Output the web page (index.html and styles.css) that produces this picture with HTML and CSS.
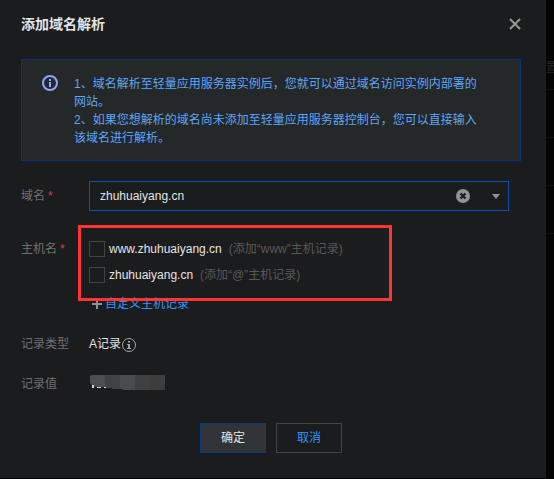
FILE: index.html
```html
<!DOCTYPE html>
<html lang="zh-CN">
<head>
<meta charset="utf-8">
<title>添加域名解析</title>
<link rel="stylesheet" href="styles.css">
</head>
<body>
<main class="dialog" role="dialog" aria-labelledby="dialog-title">
  <header class="dialog-header">
    <h1 class="dialog-title" id="dialog-title">添加域名解析</h1>
    <button class="icon-button" type="button" aria-label="关闭">
      <svg width="12" height="12" viewBox="0 0 12 12" fill="none" stroke="#999791" stroke-width="2"><path d="M1 1l10 10M11 1L1 11"/></svg>
    </button>
  </header>

  <section class="notice">
    <svg class="notice-icon" width="16" height="16" viewBox="0 0 16 16" fill="none"><circle cx="8" cy="8" r="7" stroke="#8fa5ff" stroke-width="2"/><path d="M7 4h2v2H7zM7 7h2v5H7z" fill="#8fa5ff"/></svg>
    <p class="notice-text">1、域名解析至轻量应用服务器实例后，您就可以通过域名访问实例内部署的网站。<br>2、如果您想解析的域名尚未添加至轻量应用服务器控制台，您可以直接输入该域名进行解析。</p>
  </section>

  <form class="form">
    <div class="row">
      <label class="row-label" for="domain">域名<span class="required">*</span></label>
      <div class="combo">
        <input class="combo-input" id="domain" type="text" value="zhuhuaiyang.cn">
        <button class="icon-button" type="button" aria-label="清除">
          <svg width="14" height="14" viewBox="0 0 14 14"><circle cx="7" cy="7" r="7" fill="#929292"/><path d="M4.5 4.5l5 5M9.5 4.5l-5 5" stroke="#1b1c1e" stroke-width="2.2"/></svg>
        </button>
        <button class="icon-button" type="button" aria-label="展开">
          <svg width="8" height="5" viewBox="0 0 8 5"><path d="M0 0h8L4 5z" fill="#929292"/></svg>
        </button>
      </div>
    </div>

    <div class="row">
      <span class="row-label" id="host-label">主机名<span class="required">*</span></span>
      <div class="hosts" role="group" aria-labelledby="host-label">
        <label class="host"><input class="checkbox" type="checkbox"><span>www.zhuhuaiyang.cn</span><span class="hint">(添加“www”主机记录)</span></label>
        <label class="host"><input class="checkbox" type="checkbox"><span>zhuhuaiyang.cn</span><span class="hint">(添加“@”主机记录)</span></label>
        <a class="add-host" href="#custom">
          <svg width="10" height="10" viewBox="0 0 10 10" stroke="#929292" stroke-width="2"><path d="M0 5h10M5 0v10"/></svg>自定义主机记录</a>
        <div class="highlight"></div>
      </div>
    </div>

    <div class="row">
      <span class="row-label">记录类型</span>
      <div class="value">A记录<svg class="info-icon" width="14" height="14" viewBox="0 0 14 14" fill="none"><circle cx="7" cy="7" r="6.5" stroke="#a5a5a5"/><path d="M6 3h2v1.5H6zM5 6h3v4h1v1H5v-1h1V7H5z" fill="#a5a5a5"/></svg></div>
    </div>

    <div class="row">
      <span class="row-label">记录值</span>
      <div class="value">
        <svg class="mask" width="75" height="16" viewBox="0 0 75 16" role="img" aria-label="已遮盖"><path d="M0 2L2 1h13v12H6L2 11 0 9z" fill="#4d4e50"/><path d="M15 1h15v14h-8v-1h-7z" fill="#414244"/><path d="M30 1h15v15H33v-1h-3z" fill="#4a4b4d"/><path d="M45 1h15v15H45z" fill="#3f4042"/><path d="M60 1h15v15H60z" fill="#3c3d3c"/><path d="M2 11h2v3H2zM7 13h1v1H7zM8 13h3v1H8zM14 13h2v1h-2z" fill="#d0d0d0"/></svg>
      </div>
    </div>
  </form>

  <footer class="actions">
    <button class="button button-primary" type="button">确定</button>
    <button class="button" type="button">取消</button>
  </footer>
</main>
<aside class="backdrop">
  <div class="backdrop-cell">置</div>
  <div class="backdrop-cell"></div>
  <div class="backdrop-cell"></div>
  <div class="backdrop-cell"></div>
</aside>
</body>
</html>
```
FILE: styles.css
```css
* {
  box-sizing: border-box;
}

body {
  margin: 0;
  min-height: 100vh;
  padding-bottom: 1px;
  display: flex;
  background: #050505;
  color: #e4e4e4;
  font: 12px/18px "Liberation Sans", "Noto Sans CJK SC", sans-serif;
}

.dialog {
  flex: 1;
  min-width: 0;
  padding: 13px 25px 25px 21px;
  background: #1b1c1e;
}

.dialog-header {
  display: flex;
  align-items: center;
  justify-content: space-between;
  height: 22px;
}

.dialog-title {
  margin: 0;
  font-size: 14px;
  line-height: 22px;
  font-weight: 700;
}

.icon-button {
  display: flex;
  padding: 0;
  border: 0;
  background: none;
  cursor: pointer;
}

.notice {
  display: flex;
  gap: 16px;
  margin-top: 24px;
  padding: 15px 40px 13px 20px;
  border: 1px solid #063477;
  background: #242829;
  color: #5fa5f8;
}

.notice-icon {
  flex: none;
}

.notice-text {
  margin: 0;
}

.form {
  padding: 20px 12px 0 0;
}

.row {
  display: grid;
  grid-template-columns: 68px 1fr;
  margin-bottom: 14px;
  line-height: 26px;
}

.row:first-child {
  margin-bottom: 25px;
  line-height: 30px;
}

.row-label {
  color: #707070;
}

.required {
  margin-left: 3px;
  color: #d93f40;
}

.combo {
  display: flex;
  align-items: center;
  gap: 22px;
  height: 30px;
  padding: 0 8px 0 10px;
  border: 1px solid #0751b5;
}

.combo-input {
  flex: 1;
  min-width: 0;
  padding: 0;
  border: 0;
  outline: 0;
  background: none;
  color: inherit;
  font: inherit;
}

.hosts {
  position: relative;
  display: flex;
  flex-direction: column;
  align-items: flex-start;
}

.host {
  display: flex;
  align-items: center;
  gap: 4px;
}

.checkbox {
  appearance: none;
  width: 16px;
  height: 16px;
  margin: 0;
  border: 1px solid #414345;
}

.checkbox:checked {
  background: #0751b5;
}

.hint {
  margin-left: 3px;
  color: #585858;
}

.add-host {
  display: flex;
  align-items: center;
  gap: 3px;
  margin-top: 3px;
  padding-left: 3px;
  color: #3296f5;
  text-decoration: none;
}

.highlight {
  position: absolute;
  top: -11px;
  left: -11px;
  width: 314px;
  height: 76px;
  border: 3px solid #ff3434;
  pointer-events: none;
}

.value {
  display: flex;
  align-items: center;
}

.info-icon {
  margin: 2px 0 0 1px;
}

.mask {
  margin: 0 0 4px 1px;
}

.actions {
  display: flex;
  justify-content: center;
  gap: 10px;
  padding-top: 12px;
}

.button {
  width: 66px;
  height: 30px;
  padding: 0;
  border: 1px solid #414345;
  background: none;
  color: #3296f5;
  font: inherit;
  cursor: pointer;
}

.button-primary {
  border-color: #063b86;
  background: #303437;
  color: #e6e6e6;
}

.backdrop {
  width: 8px;
  padding-top: 42px;
  overflow: hidden;
}

.backdrop-cell {
  height: 48px;
  border-bottom: 1px solid #111;
  color: #252525;
  line-height: 52px;
}
```
